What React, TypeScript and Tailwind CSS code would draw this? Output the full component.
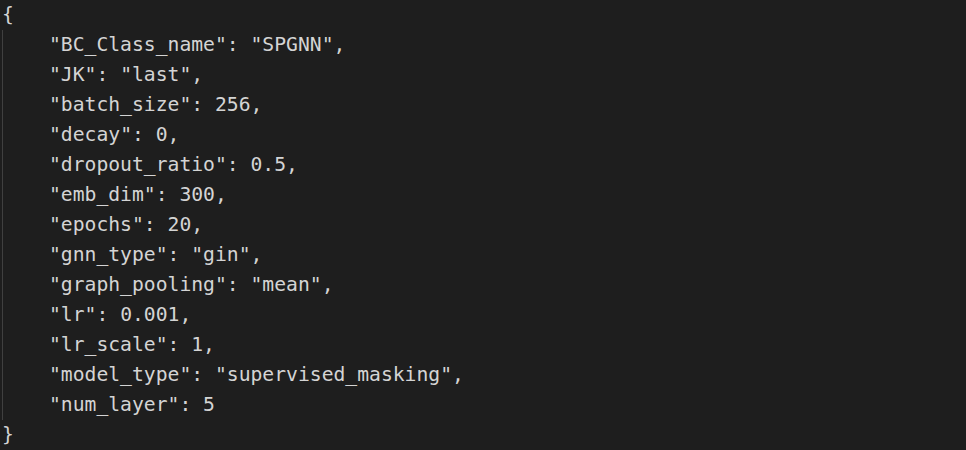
const entries: [string, string][] = [
  ['BC_Class_name', '"SPGNN"'],
  ['JK', '"last"'],
  ['batch_size', '256'],
  ['decay', '0'],
  ['dropout_ratio', '0.5'],
  ['emb_dim', '300'],
  ['epochs', '20'],
  ['gnn_type', '"gin"'],
  ['graph_pooling', '"mean"'],
  ['lr', '0.001'],
  ['lr_scale', '1'],
  ['model_type', '"supervised_masking"'],
  ['num_layer', '5'],
];

export default function App() {
  return (
    <div className="w-[966px] h-[450px] bg-[#1e1e1e] text-[#d4d4d4] font-['DejaVu_Sans_Mono',monospace] text-[19.7px] leading-[30px] pl-[2px] overflow-hidden whitespace-pre">
      <div>{'{'}</div>
      <div className="flex">
        <div className="w-[1px] bg-[#404040] mr-[46px]" />
        <div>
          {entries.map(([k, v], i) => (
            <div key={k}>
              "{k}": {v}
              {i < entries.length - 1 ? ',' : ''}
            </div>
          ))}
        </div>
      </div>
      <div>{'}'}</div>
    </div>
  );
}
